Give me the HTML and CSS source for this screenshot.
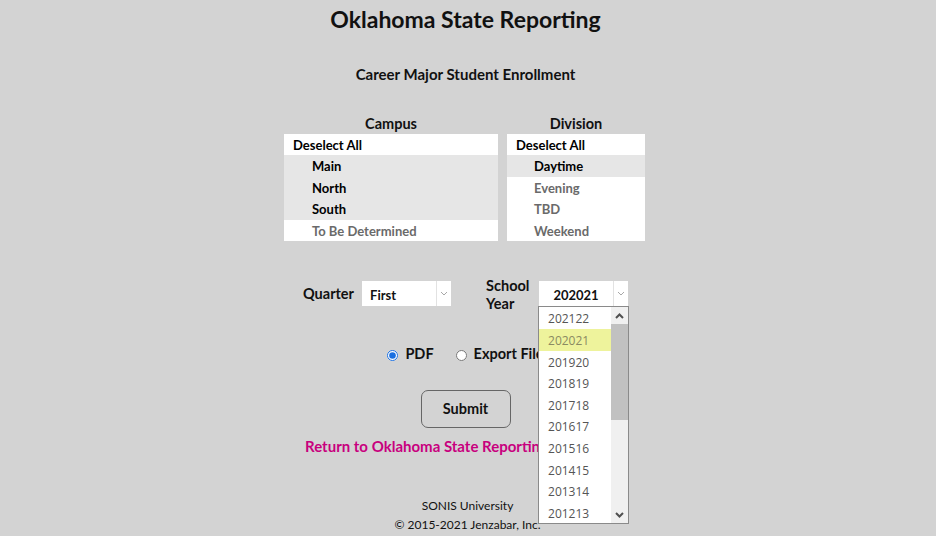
FILE: index.html
```html
<!DOCTYPE html>
<html lang="en">
<head>
    <meta charset="UTF-8">
    <title>Oklahoma State Reporting</title>
    <link rel="stylesheet" href="styles.css">
</head>
<body>
    <h1 class="title">Oklahoma State Reporting</h1>
    <h2 class="subtitle">Career Major Student Enrollment</h2>

    <div class="lists">
        <div class="list-col">
            <div class="list-label">Campus</div>
            <ul class="listbox campus">
                <li class="all">Deselect All</li>
                <li class="opt selected">Main</li>
                <li class="opt selected">North</li>
                <li class="opt selected">South</li>
                <li class="opt">To Be Determined</li>
            </ul>
        </div>
        <div class="list-col">
            <div class="list-label">Division</div>
            <ul class="listbox division">
                <li class="all">Deselect All</li>
                <li class="opt selected">Daytime</li>
                <li class="opt">Evening</li>
                <li class="opt">TBD</li>
                <li class="opt">Weekend</li>
            </ul>
        </div>
    </div>

    <div class="params">
        <label class="param-label">Quarter</label>
        <div class="select">
            <span class="select-value">First</span>
            <span class="select-arrow">
                <svg width="8" height="5" viewBox="0 0 8 5"><polyline points="1,1 4,4 7,1" fill="none" stroke="#a8a8a8" stroke-width="1"/></svg>
            </span>
        </div>
        <label class="param-label year-label">School Year</label>
        <div class="select year">
            <span class="select-value">202021</span>
            <span class="select-arrow">
                <svg width="8" height="5" viewBox="0 0 8 5"><polyline points="1,1 4,4 7,1" fill="none" stroke="#a8a8a8" stroke-width="1"/></svg>
            </span>
            <div class="dropdown">
                <ul class="dropdown-items">
                    <li>202122</li>
                    <li class="hover">202021</li>
                    <li>201920</li>
                    <li>201819</li>
                    <li>201718</li>
                    <li>201617</li>
                    <li>201516</li>
                    <li>201415</li>
                    <li>201314</li>
                    <li>201213</li>
                </ul>
                <div class="scrollbar">
                    <div class="scroll-btn">
                        <svg width="9" height="6" viewBox="0 0 9 6"><polyline points="1,5 4.5,1.5 8,5" fill="none" stroke="#505050" stroke-width="2"/></svg>
                    </div>
                    <div class="scroll-track">
                        <div class="scroll-thumb"></div>
                    </div>
                    <div class="scroll-btn">
                        <svg width="9" height="6" viewBox="0 0 9 6"><polyline points="1,1 4.5,4.5 8,1" fill="none" stroke="#505050" stroke-width="2"/></svg>
                    </div>
                </div>
            </div>
        </div>
    </div>

    <div class="format">
        <label class="radio"><input type="radio" name="format" checked> PDF</label>
        <label class="radio"><input type="radio" name="format"> Export File</label>
    </div>

    <div class="actions">
        <button class="submit" type="button">Submit</button>
    </div>

    <a class="return-link" href="#">Return to Oklahoma State Reporting</a>

    <footer>
        <div>SONIS University</div>
        <div>&copy; 2015-2021 Jenzabar, Inc.</div>
    </footer>
</body>
</html>
```

FILE: styles.css
```css
body {
    margin: 0;
    padding: 0 5px 0 0;
    background-color: #d3d3d3;
    font-family: 'Lato', 'Open Sans', sans-serif;
    color: #111;
    height: 536px;
    overflow: hidden;
    text-align: center;
}

.title {
    margin: 0;
    padding-top: 5px;
    font-size: 23px;
    line-height: 28px;
    font-weight: 700;
    color: #111;
}

.subtitle {
    margin: 31px 0 0;
    font-size: 15px;
    line-height: 20px;
    font-weight: 700;
}

.lists {
    display: flex;
    justify-content: center;
    gap: 9px;
    margin-top: 31px;
    padding-right: 2px;
}

.list-label {
    font-size: 14.5px;
    font-weight: 700;
    line-height: 18px;
    margin-bottom: 1px;
}

.listbox {
    list-style: none;
    margin: 0;
    padding: 0;
    background: #fff;
    text-align: left;
    font-size: 13px;
    font-weight: 700;
}

.listbox.campus {
    width: 214px;
}

.listbox.division {
    width: 138px;
}

.listbox li {
    height: 21.4px;
    line-height: 22.4px;
    white-space: nowrap;
}

.listbox .all {
    padding-left: 9px;
    color: #000;
}

.listbox .opt {
    padding-left: 28px;
    color: #6a6a6a;
}

.listbox .opt.selected {
    background: #e6e6e6;
    color: #000;
}

.division .opt {
    padding-left: 27px;
}

.params {
    display: flex;
    justify-content: center;
    align-items: center;
    height: 36px;
    margin-top: 35px;
}

.param-label {
    font-size: 14.5px;
    font-weight: 700;
    line-height: 18px;
    text-align: left;
}

.year-label {
    width: 47px;
    margin-left: 35px;
    padding-top: 2px;
}

.select {
    position: relative;
    display: flex;
    align-items: center;
    width: 89px;
    height: 25px;
    margin-left: 8px;
    background: #fff;
    font-size: 13px;
    font-weight: 700;
    text-align: left;
}

.select.year {
    margin-left: 6px;
}

.select-value {
    flex: 1;
    padding-left: 8px;
    padding-top: 3px;
}

.year .select-value {
    text-align: center;
    padding-left: 0;
}

.select-arrow {
    width: 14px;
    height: 25px;
    border-left: 1px solid #e2e2e2;
    display: flex;
    align-items: center;
    justify-content: center;
}

.dropdown {
    position: absolute;
    top: 25px;
    left: -1px;
    width: 89px;
    height: 216px;
    border: 1px solid #8a8a8a;
    background: #fff;
    display: flex;
    z-index: 10;
}

.dropdown-items {
    list-style: none;
    margin: 0;
    padding: 0;
    flex: 1;
    font-family: 'Open Sans', 'Noto Sans', sans-serif;
    font-size: 12px;
    font-weight: 400;
    color: #555;
}

.dropdown-items li {
    height: 21.6px;
    line-height: 23.6px;
    padding-left: 9px;
}

.dropdown-items li.hover {
    background: #eef39c;
    color: #8a8a62;
}

.scrollbar {
    width: 17px;
    display: flex;
    flex-direction: column;
    background: #f0f0f0;
}

.scroll-btn {
    height: 17px;
    display: flex;
    align-items: center;
    justify-content: center;
}

.scroll-track {
    flex: 1;
}

.scroll-thumb {
    height: 96px;
    background: #c1c1c1;
}

.format {
    display: flex;
    justify-content: center;
    gap: 22px;
    margin-top: 32px;
    height: 20px;
    align-items: center;
}

.radio {
    display: flex;
    align-items: center;
    font-size: 14.5px;
    font-weight: 700;
}

.radio input {
    margin: 3px 7px 0 0;
    width: 11px;
    height: 11px;
    accent-color: #1a6fe0;
}

.actions {
    margin-top: 26px;
}

.submit {
    width: 90px;
    height: 38px;
    background: transparent;
    border: 1px solid #666;
    border-radius: 7px;
    font-family: 'Lato', 'Open Sans', sans-serif;
    font-size: 14.5px;
    font-weight: 700;
    color: #111;
    cursor: pointer;
}

.return-link {
    display: block;
    margin-top: 8px;
    padding-right: 78px;
    line-height: 21px;
    font-size: 15px;
    font-weight: 700;
    color: #c8007e;
    text-decoration: none;
}

footer {
    margin-top: 39px;
    padding-left: 4px;
    font-size: 12px;
    line-height: 19px;
    color: #111;
}
```
